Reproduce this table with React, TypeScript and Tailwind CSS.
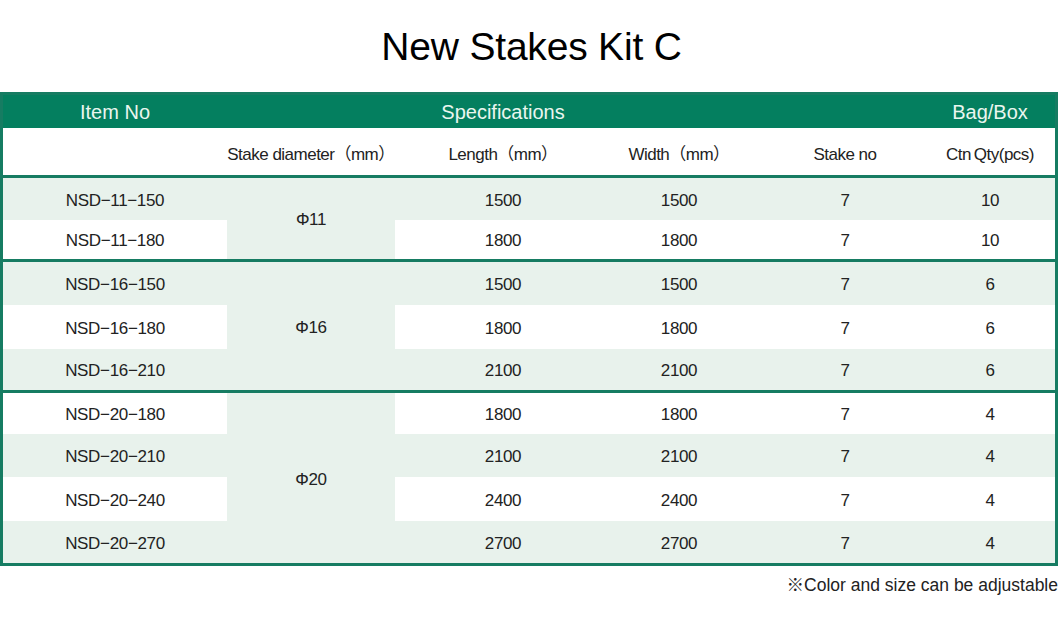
import React from 'react';

// Stake kit spec table
type Row = {
  item: string;
  length: string;
  width: string;
  stakes: string;
  qty: string;
  h: string;
};

type Group = {
  dia: string;
  span: string;
  rows: Row[];
};

const groups: Group[] = [
  {
    dia: 'Φ11',
    span: 'row-span-2',
    rows: [
      { item: 'NSD−11−150', length: '1500', width: '1500', stakes: '7', qty: '10', h: 'h-[42px]' },
      { item: 'NSD−11−180', length: '1800', width: '1800', stakes: '7', qty: '10', h: 'h-[39px]' },
    ],
  },
  {
    dia: 'Φ16',
    span: 'row-span-3',
    rows: [
      { item: 'NSD−16−150', length: '1500', width: '1500', stakes: '7', qty: '6', h: 'h-[43px]' },
      { item: 'NSD−16−180', length: '1800', width: '1800', stakes: '7', qty: '6', h: 'h-[44px]' },
      { item: 'NSD−16−210', length: '2100', width: '2100', stakes: '7', qty: '6', h: 'h-[41px]' },
    ],
  },
  {
    dia: 'Φ20',
    span: 'row-span-4',
    rows: [
      { item: 'NSD−20−180', length: '1800', width: '1800', stakes: '7', qty: '4', h: 'h-[41px]' },
      { item: 'NSD−20−210', length: '2100', width: '2100', stakes: '7', qty: '4', h: 'h-[43px]' },
      { item: 'NSD−20−240', length: '2400', width: '2400', stakes: '7', qty: '4', h: 'h-[44px]' },
      { item: 'NSD−20−270', length: '2700', width: '2700', stakes: '7', qty: '4', h: 'h-[42px]' },
    ],
  },
];

const cols = 'grid grid-cols-[224px_168px_216px_136px_196px_1fr]';

export default function App() {
  let idx = 0;

  return (
    <div className="w-[1063px] h-[617px] bg-white font-['Liberation_Sans','Noto_Sans_CJK_SC',sans-serif] text-[#222]">
      {/* Title */}
      <div className="h-[92px] flex items-center justify-center">
        <h1 className="text-[39px] text-black tracking-[-0.005em] leading-none">New Stakes Kit C</h1>
      </div>

      <div className="w-[1058px] border-[3px] border-[#167c62]">
        {/* Header band */}
        <div className={`${cols} h-[33px] bg-[#047f5f] text-[20px] text-[#eaf6ef] items-center leading-none`}>
          <div className="text-center">Item No</div>
          <div />
          <div className="text-center">Specifications</div>
          <div />
          <div />
          <div className="text-center pr-[18px]">Bag/Box</div>
        </div>

        {/* Sub header */}
        <div className={`${cols} h-[50px] items-center text-[17px] tracking-[-0.03em] pt-[6px] border-b-[3px] border-[#167c62]`}>
          <div />
          <div className="text-center">Stake diameter（mm）</div>
          <div className="text-center">Length（mm）</div>
          <div className="text-center">Width（mm）</div>
          <div className="text-center">Stake no</div>
          <div className="text-center pr-[18px]">Ctn&thinsp;Qty(pcs)</div>
        </div>

        {groups.map((g, gi) => (
          <div
            key={g.dia}
            className={`${cols} text-[17px] tracking-[-0.02em] ${gi > 0 ? 'border-t-[3px] border-[#167c62]' : ''}`}
          >
            <div className={`col-start-2 row-start-1 ${g.span} bg-[#e8f2ec] flex items-center justify-center pt-[3px]`}>
              {g.dia}
            </div>
            {g.rows.map((r) => {
              const bg = idx++ % 2 === 0 ? 'bg-[#e8f2ec]' : 'bg-white';
              const cell = `${r.h} ${bg} flex items-center justify-center pt-[3px]`;
              return (
                <React.Fragment key={r.item}>
                  <div className={cell}>{r.item}</div>
                  <div className={cell}>{r.length}</div>
                  <div className={cell}>{r.width}</div>
                  <div className={cell}>{r.stakes}</div>
                  <div className={`${cell} pr-[18px]`}>{r.qty}</div>
                </React.Fragment>
              );
            })}
          </div>
        ))}
      </div>

      <div className="w-[1058px] text-right text-[17.5px] leading-none mt-[11px]">※Color and size can be adjustable</div>
    </div>
  );
}
